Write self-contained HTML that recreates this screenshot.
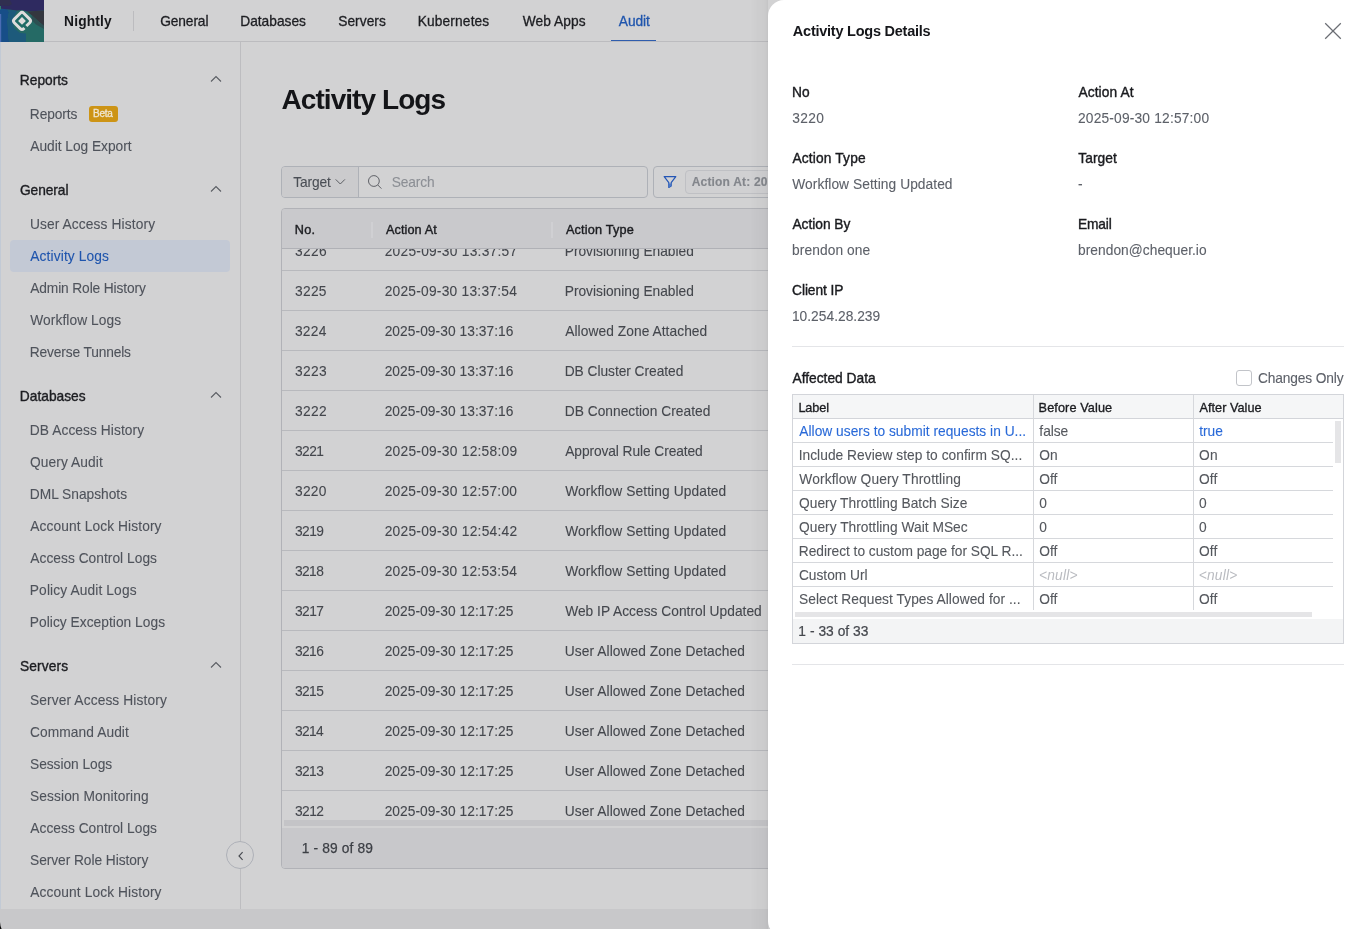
<!DOCTYPE html>
<html><head><meta charset="utf-8"><title>Activity Logs</title>
<style>
*{box-sizing:border-box;margin:0;padding:0}
html,body{width:1365px;height:929px;overflow:hidden;background:#d2d2d3;font-family:"Liberation Sans",sans-serif;}
.abs{position:absolute}
.t{position:absolute;white-space:nowrap;line-height:1;}
.tl{position:absolute;left:0;top:0;width:1365px;height:929px;will-change:transform;pointer-events:none}
.nav{font-size:13.75px;font-weight:400;color:#1d1e22;-webkit-text-stroke:0.3px #1d1e22;}
.navb{font-size:13.75px;font-weight:700;color:#17181b;}
.nava{font-size:13.75px;font-weight:400;color:#1f55ad;-webkit-text-stroke:0.3px #1f55ad;}
.sh{font-size:13.75px;font-weight:400;color:#1c1d21;-webkit-text-stroke:0.36px #1c1d21;}
.si{font-size:13.75px;font-weight:400;color:#4f535b;-webkit-text-stroke:0.1px #4f535b;}
.sia{font-size:13.75px;font-weight:400;color:#1f55ad;-webkit-text-stroke:0.1px #1f55ad;}
.beta{font-size:10px;font-weight:400;color:#efe6d2;-webkit-text-stroke:0.3px #efe6d2;}
.h1{font-size:28px;font-weight:700;color:#141518;}
.tb{font-size:13.75px;font-weight:400;color:#4a4e55;-webkit-text-stroke:0.1px #4a4e55;}
.ph{font-size:13.75px;font-weight:400;color:#8c8f95;-webkit-text-stroke:0.1px #8c8f95;}
.tag{font-size:12px;font-weight:700;color:#83868c;-webkit-text-stroke:0.15px #83868c;}
.th{font-size:12.7px;font-weight:400;color:#1c1d21;-webkit-text-stroke:0.4px #1c1d21;}
.td{font-size:13.75px;font-weight:400;color:#44474d;-webkit-text-stroke:0.1px #44474d;}
.tf{font-size:13.75px;font-weight:400;color:#3c3f45;-webkit-text-stroke:0.25px #3c3f45;}
.dt{font-size:14.5px;font-weight:700;color:#15161a;}
.dl{font-size:13.75px;font-weight:400;color:#1a1b1f;-webkit-text-stroke:0.38px #1a1b1f;}
.dv{font-size:13.75px;font-weight:400;color:#5d6169;-webkit-text-stroke:0.1px #5d6169;}
.gh{font-size:12.7px;font-weight:400;color:#1a1b1f;-webkit-text-stroke:0.32px #1a1b1f;}
.gd{font-size:13.75px;font-weight:400;color:#55585e;-webkit-text-stroke:0.1px #55585e;}
.gdb{font-size:13.75px;font-weight:400;color:#2a6ad8;-webkit-text-stroke:0.1px #2a6ad8;}
.gn{font-size:13.75px;font-weight:400;color:#b9bbc0;font-style:italic;}
.gf{font-size:13.75px;font-weight:400;color:#44474d;-webkit-text-stroke:0.22px #44474d;}
#page{position:absolute;left:0;top:0;width:1365px;height:929px;overflow:hidden;background:#d2d2d3}
#hdr{position:absolute;left:0;top:0;width:1365px;height:42px;border-bottom:1px solid #bcbcbf}
#side{position:absolute;left:0;top:42px;width:241px;height:867px;border-right:1px solid #bdbdc0}
#sel{position:absolute;left:10px;top:240px;width:220px;height:32px;border-radius:4px;background:#c3c9d5}
#beta{position:absolute;left:89px;top:106px;width:29px;height:16px;border-radius:3px;background:#cd9415}
#botbar{position:absolute;left:0;top:909px;width:1365px;height:20px;background:#c8c8ca}
#collapse{position:absolute;left:226px;top:841px;width:28px;height:28px;border-radius:50%;border:1px solid #adb0b7;background:#d2d2d3}
#tool1{position:absolute;left:281px;top:166px;width:367px;height:32px;border:1px solid #aeb1b7;border-radius:4px;overflow:hidden}
#tool1 .tg{position:absolute;left:0;top:0;width:77px;height:30px;background:#cbcbcd;border-right:1px solid #aeb1b7}
#tool2{position:absolute;left:653px;top:166px;width:400px;height:32px;border:1px solid #aeb1b7;border-radius:4px}
#tag{position:absolute;left:685px;top:170px;width:300px;height:24px;border:1px solid #bfc0c4;border-radius:4px;background:#d0d0d2}
#tbl{position:absolute;left:281px;top:208px;width:1060px;height:661px;border:1px solid #b1b2b7;border-radius:4px;overflow:hidden}
#thead{position:absolute;left:0;top:0;width:100%;height:40px;background:#c9c9cc;border-bottom:1px solid #b0b1b6}
.colsep{position:absolute;top:13px;width:2px;height:16px;background:#d0d0d3}
.rl{position:absolute;left:0;width:100%;height:1px;background:#b8b9bd}
#hscroll{position:absolute;left:2px;top:611px;width:1000px;height:6px;background:#c4c4c7}
#tfoot{position:absolute;left:0;top:619px;width:100%;height:41px;background:#c8c8cb}
#cliprow{position:absolute;left:0;top:249px;width:768px;height:30px;overflow:hidden;will-change:transform}
#cliprow .t{margin-top:-249px}
#shadow{position:absolute;left:750px;top:0;width:18px;height:929px;background:linear-gradient(to right,rgba(0,0,0,0) 0,rgba(0,0,0,0.018) 45%,rgba(0,0,0,0.03) 85%,rgba(0,0,0,0.065) 100%)}
#drawer{position:absolute;left:768px;top:0;width:605px;height:937px;background:#fff;border-radius:16px 0 0 16px}
.dv1{position:absolute;left:792px;width:552px;height:1px;background:#e4e5e8}
#grid{position:absolute;left:792px;top:394px;width:552px;height:250px;border:1px solid #d3d5da;background:#fff}
#ghead{position:absolute;left:0;top:0;width:550px;height:24px;background:#f5f6f7;border-bottom:1px solid #d3d5da}
.gl{position:absolute;left:0;width:540px;height:1px;background:#d6d8dc}
.gc{position:absolute;top:0;width:1px;height:215px;background:#d6d8dc}
#gfoot{position:absolute;left:0;top:224px;width:550px;height:24px;background:#f3f4f5}
#ghs{position:absolute;left:2px;top:217px;width:517px;height:5px;background:#e5e5e7}
#gvs{position:absolute;left:542px;top:26px;width:6px;height:42px;background:#e5e5e7}
#chk{position:absolute;left:1236px;top:370px;width:16px;height:16px;border:1px solid #c2c4c9;border-radius:3px;background:#fff}
</style></head>
<body>
<div id="page">
  <div id="hdr">
    <svg class="abs" style="left:0;top:0" width="44" height="42" viewBox="0 0 44 42">
      <rect width="44" height="42" fill="#256a65"/>
      <polygon points="0,8.5 7,9.3 9,12 7.5,20 8,30 9,42 0,42" fill="#174e88"/>
      <polygon points="7,9.3 17,11 12.5,20 14,28 20,33 26,33.5 26,42 9,42 8,30 7.5,20 9,12" fill="#1d5a7b"/>
      <polygon points="0,0 44,0 44,10.5 27,11.5 22,10 17,10.5 9,9.5 0,8.5" fill="#2e2a60"/>
      <polygon points="27,11.5 44,10.5 44,26 38,21 32,15.5" fill="#34373f"/>
      <polygon points="32,15.5 38,21 44,26 44,29 36,24.5 31,19.5" fill="#2c5052"/>
      <polygon points="0,0 10,0 12,4 9,6 1,5.5 0,6" fill="#302f50"/>
      <rect x="0" y="14" width="1.2" height="28" fill="#4a6cb4"/>
      <rect x="0" y="6" width="1" height="3.5" fill="#2f7d6e"/>
      <g transform="translate(22,20.9) rotate(45)">
        <rect x="-6.7" y="-6.7" width="13.4" height="13.4" rx="2.5" fill="#1f6b66" stroke="#dedcdc" stroke-width="2.9" stroke-dasharray="17 2.7 100"/>
        <rect x="-2.75" y="-2.75" width="5.5" height="5.5" fill="#dedcdc"/>
      </g>
    </svg>
    <div class="abs" style="left:133px;top:11px;width:1px;height:20px;background:#bcbcbf"></div>
    <div class="abs" style="left:611px;top:40px;width:45px;height:1.2px;background:#2f5dad"></div>
  </div>
  <div id="side">
  </div>
  <div class="abs" style="left:0;top:42px;width:1px;height:867px;background:#c2cad5"></div>
  <div id="sel"></div>
  <div id="beta"></div>
  <!-- sidebar chevrons -->
  <svg class="abs" style="left:210px;top:75px" width="12" height="8" viewBox="0 0 12 8"><path d="M1 6.5 L6 1.5 L11 6.5" fill="none" stroke="#5a5d63" stroke-width="1.1"/></svg>
  <svg class="abs" style="left:210px;top:185px" width="12" height="8" viewBox="0 0 12 8"><path d="M1 6.5 L6 1.5 L11 6.5" fill="none" stroke="#5a5d63" stroke-width="1.1"/></svg>
  <svg class="abs" style="left:210px;top:391px" width="12" height="8" viewBox="0 0 12 8"><path d="M1 6.5 L6 1.5 L11 6.5" fill="none" stroke="#5a5d63" stroke-width="1.1"/></svg>
  <svg class="abs" style="left:210px;top:661px" width="12" height="8" viewBox="0 0 12 8"><path d="M1 6.5 L6 1.5 L11 6.5" fill="none" stroke="#5a5d63" stroke-width="1.1"/></svg>

  <!-- toolbar -->
  <div id="tool1"><div class="tg"></div></div>
  <svg class="abs" style="left:335px;top:178px" width="11" height="8" viewBox="0 0 11 8"><path d="M0.7 1.4 L5.3 6 L9.9 1.4" fill="none" stroke="#54575d" stroke-width="0.95"/></svg>
  <svg class="abs" style="left:367px;top:174px" width="16" height="16" viewBox="0 0 16 16"><circle cx="6.9" cy="7" r="5.4" fill="none" stroke="#585b61" stroke-width="0.95"/><path d="M10.8 11 L14.4 14.6" stroke="#585b61" stroke-width="0.95" fill="none"/></svg>
  <div id="tool2"></div>
  <svg class="abs" style="left:663px;top:175px" width="14" height="14" viewBox="0 0 14 14"><path d="M1.2 1.6 H12.8 L8.2 7.6 V11 L5.8 12.4 V7.6 Z" fill="none" stroke="#2456b5" stroke-width="1.2" stroke-linejoin="round"/><path d="M5.8 8.6 L8.2 8.6 L8.2 11 L5.8 12.4 Z" fill="#4a78c8"/></svg>
  <div id="tag"></div>

  <!-- table -->
  <div id="tbl">
    <div id="thead">
      <div class="colsep" style="left:89px"></div>
      <div class="colsep" style="left:269px"></div>
    </div>
    <div class="rl" style="top:61px"></div><div class="rl" style="top:101px"></div><div class="rl" style="top:141px"></div>
    <div class="rl" style="top:181px"></div><div class="rl" style="top:221px"></div><div class="rl" style="top:261px"></div>
    <div class="rl" style="top:301px"></div><div class="rl" style="top:341px"></div><div class="rl" style="top:381px"></div>
    <div class="rl" style="top:421px"></div><div class="rl" style="top:461px"></div><div class="rl" style="top:501px"></div>
    <div class="rl" style="top:541px"></div><div class="rl" style="top:581px"></div>
    <div id="hscroll"></div>
    <div id="tfoot"></div>
  </div>
  <div id="cliprow">
<span id="t40" class="t td" style="left:294.93px;top:245.00px;letter-spacing:0.345px;">3226</span>
<span id="t41" class="t td" style="left:384.66px;top:245.00px;letter-spacing:0.266px;">2025-09-30 13:37:57</span>
<span id="t42" class="t td" style="left:564.72px;top:245.00px;letter-spacing:-0.004px;">Provisioning Enabled</span>
  </div>
<div class="tl">
<span id="t0" class="t navb" style="left:64.08px;top:15.00px;letter-spacing:0.181px;">Nightly</span>
<span id="t1" class="t nav" style="left:160.16px;top:15.00px;letter-spacing:-0.102px;">General</span>
<span id="t2" class="t nav" style="left:240.22px;top:15.00px;letter-spacing:-0.003px;">Databases</span>
<span id="t3" class="t nav" style="left:338.23px;top:15.00px;letter-spacing:0.041px;">Servers</span>
<span id="t4" class="t nav" style="left:417.72px;top:15.00px;letter-spacing:0.133px;">Kubernetes</span>
<span id="t5" class="t nav" style="left:522.79px;top:15.00px;letter-spacing:0.046px;">Web Apps</span>
<span id="t6" class="t nava" style="left:618.82px;top:15.00px;letter-spacing:-0.079px;">Audit</span>
<span id="t7" class="t sh" style="left:19.85px;top:74.00px;letter-spacing:0.001px;">Reports</span>
<span id="t8" class="t si" style="left:29.82px;top:108.00px;letter-spacing:-0.105px;">Reports</span>
<span id="t9" class="t beta" style="left:92.93px;top:109.00px;letter-spacing:-0.186px;">Beta</span>
<span id="t10" class="t si" style="left:30.32px;top:140.00px;letter-spacing:-0.030px;">Audit Log Export</span>
<span id="t11" class="t sh" style="left:19.99px;top:184.00px;letter-spacing:-0.078px;">General</span>
<span id="t12" class="t si" style="left:29.89px;top:218.00px;letter-spacing:0.121px;">User Access History</span>
<span id="t13" class="t sia" style="left:30.32px;top:250.00px;letter-spacing:0.120px;">Activity Logs</span>
<span id="t14" class="t si" style="left:30.32px;top:282.00px;letter-spacing:-0.131px;">Admin Role History</span>
<span id="t15" class="t si" style="left:30.29px;top:314.00px;letter-spacing:0.078px;">Workflow Logs</span>
<span id="t16" class="t si" style="left:29.82px;top:346.00px;letter-spacing:-0.147px;">Reverse Tunnels</span>
<span id="t17" class="t sh" style="left:19.85px;top:390.00px;letter-spacing:0.002px;">Databases</span>
<span id="t18" class="t si" style="left:29.82px;top:424.00px;letter-spacing:0.073px;">DB Access History</span>
<span id="t19" class="t si" style="left:30.00px;top:456.00px;letter-spacing:0.099px;">Query Audit</span>
<span id="t20" class="t si" style="left:29.82px;top:488.00px;letter-spacing:-0.009px;">DML Snapshots</span>
<span id="t21" class="t si" style="left:30.32px;top:520.00px;letter-spacing:0.105px;">Account Lock History</span>
<span id="t22" class="t si" style="left:30.32px;top:552.00px;letter-spacing:0.029px;">Access Control Logs</span>
<span id="t23" class="t si" style="left:29.82px;top:584.00px;letter-spacing:0.125px;">Policy Audit Logs</span>
<span id="t24" class="t si" style="left:29.82px;top:616.00px;letter-spacing:0.035px;">Policy Exception Logs</span>
<span id="t25" class="t sh" style="left:20.06px;top:660.00px;letter-spacing:0.098px;">Servers</span>
<span id="t26" class="t si" style="left:30.03px;top:694.00px;letter-spacing:0.113px;">Server Access History</span>
<span id="t27" class="t si" style="left:29.95px;top:726.00px;letter-spacing:0.089px;">Command Audit</span>
<span id="t28" class="t si" style="left:30.03px;top:758.00px;letter-spacing:-0.031px;">Session Logs</span>
<span id="t29" class="t si" style="left:30.03px;top:790.00px;letter-spacing:0.098px;">Session Monitoring</span>
<span id="t30" class="t si" style="left:30.32px;top:822.00px;letter-spacing:0.029px;">Access Control Logs</span>
<span id="t31" class="t si" style="left:30.03px;top:854.00px;letter-spacing:-0.053px;">Server Role History</span>
<span id="t32" class="t si" style="left:30.32px;top:886.00px;letter-spacing:0.105px;">Account Lock History</span>
<span id="t33" class="t h1" style="left:281.50px;top:86.00px;letter-spacing:-0.939px;">Activity Logs</span>
<span id="t34" class="t tb" style="left:293.34px;top:176.00px;letter-spacing:-0.142px;">Target</span>
<span id="t35" class="t ph" style="left:391.63px;top:176.00px;letter-spacing:-0.092px;">Search</span>
<span id="t36" class="t tag" style="left:691.68px;top:176.00px;letter-spacing:0.187px;">Action At: 2025-09-30</span>
<span id="t37" class="t th" style="left:294.76px;top:224.00px;letter-spacing:0.276px;">No.</span>
<span id="t38" class="t th" style="left:385.88px;top:224.00px;letter-spacing:0.105px;">Action At</span>
<span id="t39" class="t th" style="left:565.88px;top:224.00px;letter-spacing:0.181px;">Action Type</span>
<span id="t43" class="t td" style="left:294.93px;top:285.00px;letter-spacing:0.336px;">3225</span>
<span id="t44" class="t td" style="left:384.66px;top:285.00px;letter-spacing:0.250px;">2025-09-30 13:37:54</span>
<span id="t45" class="t td" style="left:564.72px;top:285.00px;letter-spacing:-0.004px;">Provisioning Enabled</span>
<span id="t46" class="t td" style="left:294.93px;top:325.00px;letter-spacing:0.278px;">3224</span>
<span id="t47" class="t td" style="left:384.66px;top:325.00px;letter-spacing:0.062px;">2025-09-30 13:37:16</span>
<span id="t48" class="t td" style="left:565.22px;top:325.00px;letter-spacing:0.068px;">Allowed Zone Attached</span>
<span id="t49" class="t td" style="left:294.93px;top:365.00px;letter-spacing:0.345px;">3223</span>
<span id="t50" class="t td" style="left:384.66px;top:365.00px;letter-spacing:0.062px;">2025-09-30 13:37:16</span>
<span id="t51" class="t td" style="left:564.72px;top:365.00px;letter-spacing:-0.036px;">DB Cluster Created</span>
<span id="t52" class="t td" style="left:294.93px;top:405.00px;letter-spacing:0.374px;">3222</span>
<span id="t53" class="t td" style="left:384.66px;top:405.00px;letter-spacing:0.062px;">2025-09-30 13:37:16</span>
<span id="t54" class="t td" style="left:564.72px;top:405.00px;letter-spacing:0.019px;">DB Connection Created</span>
<span id="t55" class="t td" style="left:294.93px;top:445.00px;letter-spacing:-0.533px;">3221</span>
<span id="t56" class="t td" style="left:384.66px;top:445.00px;letter-spacing:0.264px;">2025-09-30 12:58:09</span>
<span id="t57" class="t td" style="left:565.22px;top:445.00px;letter-spacing:-0.080px;">Approval Rule Created</span>
<span id="t58" class="t td" style="left:294.93px;top:485.00px;letter-spacing:0.322px;">3220</span>
<span id="t59" class="t td" style="left:384.66px;top:485.00px;letter-spacing:0.258px;">2025-09-30 12:57:00</span>
<span id="t60" class="t td" style="left:565.19px;top:485.00px;letter-spacing:0.101px;">Workflow Setting Updated</span>
<span id="t61" class="t td" style="left:294.93px;top:525.00px;letter-spacing:-0.540px;">3219</span>
<span id="t62" class="t td" style="left:384.66px;top:525.00px;letter-spacing:0.266px;">2025-09-30 12:54:42</span>
<span id="t63" class="t td" style="left:565.19px;top:525.00px;letter-spacing:0.101px;">Workflow Setting Updated</span>
<span id="t64" class="t td" style="left:294.93px;top:565.00px;letter-spacing:-0.558px;">3218</span>
<span id="t65" class="t td" style="left:384.66px;top:565.00px;letter-spacing:0.250px;">2025-09-30 12:53:54</span>
<span id="t66" class="t td" style="left:565.19px;top:565.00px;letter-spacing:0.101px;">Workflow Setting Updated</span>
<span id="t67" class="t td" style="left:294.93px;top:605.00px;letter-spacing:-0.526px;">3217</span>
<span id="t68" class="t td" style="left:384.66px;top:605.00px;letter-spacing:0.060px;">2025-09-30 12:17:25</span>
<span id="t69" class="t td" style="left:565.19px;top:605.00px;letter-spacing:0.022px;">Web IP Access Control Updated</span>
<span id="t70" class="t td" style="left:294.93px;top:645.00px;letter-spacing:-0.555px;">3216</span>
<span id="t71" class="t td" style="left:384.66px;top:645.00px;letter-spacing:0.060px;">2025-09-30 12:17:25</span>
<span id="t72" class="t td" style="left:564.79px;top:645.00px;letter-spacing:0.078px;">User Allowed Zone Detached</span>
<span id="t73" class="t td" style="left:294.93px;top:685.00px;letter-spacing:-0.564px;">3215</span>
<span id="t74" class="t td" style="left:384.66px;top:685.00px;letter-spacing:0.060px;">2025-09-30 12:17:25</span>
<span id="t75" class="t td" style="left:564.79px;top:685.00px;letter-spacing:0.078px;">User Allowed Zone Detached</span>
<span id="t76" class="t td" style="left:294.93px;top:725.00px;letter-spacing:-0.600px;">3214</span>
<span id="t77" class="t td" style="left:384.66px;top:725.00px;letter-spacing:0.060px;">2025-09-30 12:17:25</span>
<span id="t78" class="t td" style="left:564.79px;top:725.00px;letter-spacing:0.078px;">User Allowed Zone Detached</span>
<span id="t79" class="t td" style="left:294.93px;top:765.00px;letter-spacing:-0.555px;">3213</span>
<span id="t80" class="t td" style="left:384.66px;top:765.00px;letter-spacing:0.060px;">2025-09-30 12:17:25</span>
<span id="t81" class="t td" style="left:564.79px;top:765.00px;letter-spacing:0.078px;">User Allowed Zone Detached</span>
<span id="t82" class="t td" style="left:294.93px;top:805.00px;letter-spacing:-0.526px;">3212</span>
<span id="t83" class="t td" style="left:384.66px;top:805.00px;letter-spacing:0.060px;">2025-09-30 12:17:25</span>
<span id="t84" class="t td" style="left:564.79px;top:805.00px;letter-spacing:0.078px;">User Allowed Zone Detached</span>
<span id="t85" class="t tf" style="left:301.78px;top:842.00px;letter-spacing:0.144px;">1 - 89 of 89</span>
  </div>
  <div id="botbar"></div>
  <svg class="abs" style="left:0;top:922px" width="3" height="7" viewBox="0 0 3 7"><path d="M0 0 Q0.3 5 1.6 7 L0 7 Z" fill="#0a0a0a"/></svg>
  <div id="collapse"><svg class="abs" style="left:8.6px;top:7.5px" width="10" height="12" viewBox="0 0 10 12"><path d="M6.6 2.2 L3 6 L6.6 9.8" fill="none" stroke="#484b51" stroke-width="1.15"/></svg></div>
  <div id="shadow"></div>

  <div id="drawer"></div>
  <svg class="abs" style="left:1324px;top:22px" width="18" height="18" viewBox="0 0 18 18"><path d="M1.2 1.2 L16.8 16.8 M16.8 1.2 L1.2 16.8" stroke="#6b6e74" stroke-width="1.25" fill="none"/></svg>
  <div class="dv1" style="top:346px"></div>
  <div class="dv1" style="top:664px"></div>
  <div id="chk"></div>
  <div id="grid">
    <div id="ghead"></div>
    <div class="gl" style="top:47px"></div><div class="gl" style="top:71px"></div><div class="gl" style="top:95px"></div>
    <div class="gl" style="top:119px"></div><div class="gl" style="top:143px"></div><div class="gl" style="top:167px"></div><div class="gl" style="top:191px"></div>
    <div class="gc" style="left:240px"></div><div class="gc" style="left:400px"></div>
    <div id="ghs"></div><div id="gvs"></div>
    <div id="gfoot"></div>
  </div>
<div class="tl">
<span id="t86" class="t dt" style="left:792.84px;top:24.00px;letter-spacing:-0.243px;">Activity Logs Details</span>
<span id="t87" class="t dl" style="left:791.96px;top:86.00px;letter-spacing:0.047px;">No</span>
<span id="t88" class="t dl" style="left:1078.46px;top:86.00px;letter-spacing:0.096px;">Action At</span>
<span id="t89" class="t dv" style="left:792.13px;top:112.00px;letter-spacing:0.356px;">3220</span>
<span id="t90" class="t dv" style="left:1077.96px;top:112.00px;letter-spacing:0.191px;">2025-09-30 12:57:00</span>
<span id="t91" class="t dl" style="left:792.46px;top:152.00px;letter-spacing:0.155px;">Action Type</span>
<span id="t92" class="t dl" style="left:1078.18px;top:152.00px;letter-spacing:0.102px;">Target</span>
<span id="t93" class="t dv" style="left:792.29px;top:178.00px;letter-spacing:0.066px;">Workflow Setting Updated</span>
<span id="t94" class="t dv" style="left:1078.04px;top:178.00px;letter-spacing:0.000px;">-</span>
<span id="t95" class="t dl" style="left:792.46px;top:218.00px;letter-spacing:-0.028px;">Action By</span>
<span id="t96" class="t dl" style="left:1077.96px;top:218.00px;letter-spacing:-0.131px;">Email</span>
<span id="t97" class="t dv" style="left:792.06px;top:244.00px;letter-spacing:0.086px;">brendon one</span>
<span id="t98" class="t dv" style="left:1078.06px;top:244.00px;letter-spacing:0.041px;">brendon@chequer.io</span>
<span id="t99" class="t dl" style="left:792.09px;top:284.00px;letter-spacing:-0.091px;">Client IP</span>
<span id="t100" class="t dv" style="left:791.90px;top:310.00px;letter-spacing:0.030px;">10.254.28.239</span>
<span id="t101" class="t dl" style="left:792.46px;top:372.00px;letter-spacing:0.014px;">Affected Data</span>
<span id="t102" class="t dv" style="left:1258.05px;top:372.00px;letter-spacing:-0.147px;">Changes Only</span>
<span id="t103" class="t gh" style="left:798.42px;top:402.00px;letter-spacing:-0.094px;">Label</span>
<span id="t104" class="t gh" style="left:1038.62px;top:402.00px;letter-spacing:0.097px;">Before Value</span>
<span id="t105" class="t gh" style="left:1199.44px;top:402.00px;letter-spacing:0.034px;">After Value</span>
<span id="t106" class="t gdb" style="left:799.32px;top:425.00px;letter-spacing:0.016px;">Allow users to submit requests in U...</span>
<span id="t107" class="t gd" style="left:1039.36px;top:425.00px;letter-spacing:-0.035px;">false</span>
<span id="t108" class="t gdb" style="left:1199.14px;top:425.00px;letter-spacing:0.005px;">true</span>
<span id="t109" class="t gd" style="left:798.68px;top:449.00px;letter-spacing:0.035px;">Include Review step to confirm SQ...</span>
<span id="t110" class="t gd" style="left:1039.20px;top:449.00px;letter-spacing:0.200px;">On</span>
<span id="t111" class="t gd" style="left:1199.00px;top:449.00px;letter-spacing:0.200px;">On</span>
<span id="t112" class="t gd" style="left:799.29px;top:473.00px;letter-spacing:0.130px;">Workflow Query Throttling</span>
<span id="t113" class="t gd" style="left:1039.20px;top:473.00px;letter-spacing:0.069px;">Off</span>
<span id="t114" class="t gd" style="left:1199.00px;top:473.00px;letter-spacing:0.069px;">Off</span>
<span id="t115" class="t gd" style="left:799.00px;top:497.00px;letter-spacing:0.018px;">Query Throttling Batch Size</span>
<span id="t116" class="t gd" style="left:1039.31px;top:497.00px;letter-spacing:0.000px;">0</span>
<span id="t117" class="t gd" style="left:1199.11px;top:497.00px;letter-spacing:0.000px;">0</span>
<span id="t118" class="t gd" style="left:799.00px;top:521.00px;letter-spacing:0.020px;">Query Throttling Wait MSec</span>
<span id="t119" class="t gd" style="left:1039.31px;top:521.00px;letter-spacing:0.000px;">0</span>
<span id="t120" class="t gd" style="left:1199.11px;top:521.00px;letter-spacing:0.000px;">0</span>
<span id="t121" class="t gd" style="left:798.82px;top:545.00px;letter-spacing:-0.027px;">Redirect to custom page for SQL R...</span>
<span id="t122" class="t gd" style="left:1039.20px;top:545.00px;letter-spacing:0.069px;">Off</span>
<span id="t123" class="t gd" style="left:1199.00px;top:545.00px;letter-spacing:0.069px;">Off</span>
<span id="t124" class="t gd" style="left:798.95px;top:569.00px;letter-spacing:-0.005px;">Custom Url</span>
<span id="t125" class="t gn" style="left:1038.92px;top:569.00px;letter-spacing:0.216px;">&lt;null&gt;</span>
<span id="t126" class="t gn" style="left:1198.72px;top:569.00px;letter-spacing:0.216px;">&lt;null&gt;</span>
<span id="t127" class="t gd" style="left:799.03px;top:593.00px;letter-spacing:0.046px;">Select Request Types Allowed for ...</span>
<span id="t128" class="t gd" style="left:1039.20px;top:593.00px;letter-spacing:0.069px;">Off</span>
<span id="t129" class="t gd" style="left:1199.00px;top:593.00px;letter-spacing:0.069px;">Off</span>
<span id="t130" class="t gf" style="left:798.36px;top:625.00px;letter-spacing:0.043px;">1 - 33 of 33</span>
  </div>
</div>
</body></html>
